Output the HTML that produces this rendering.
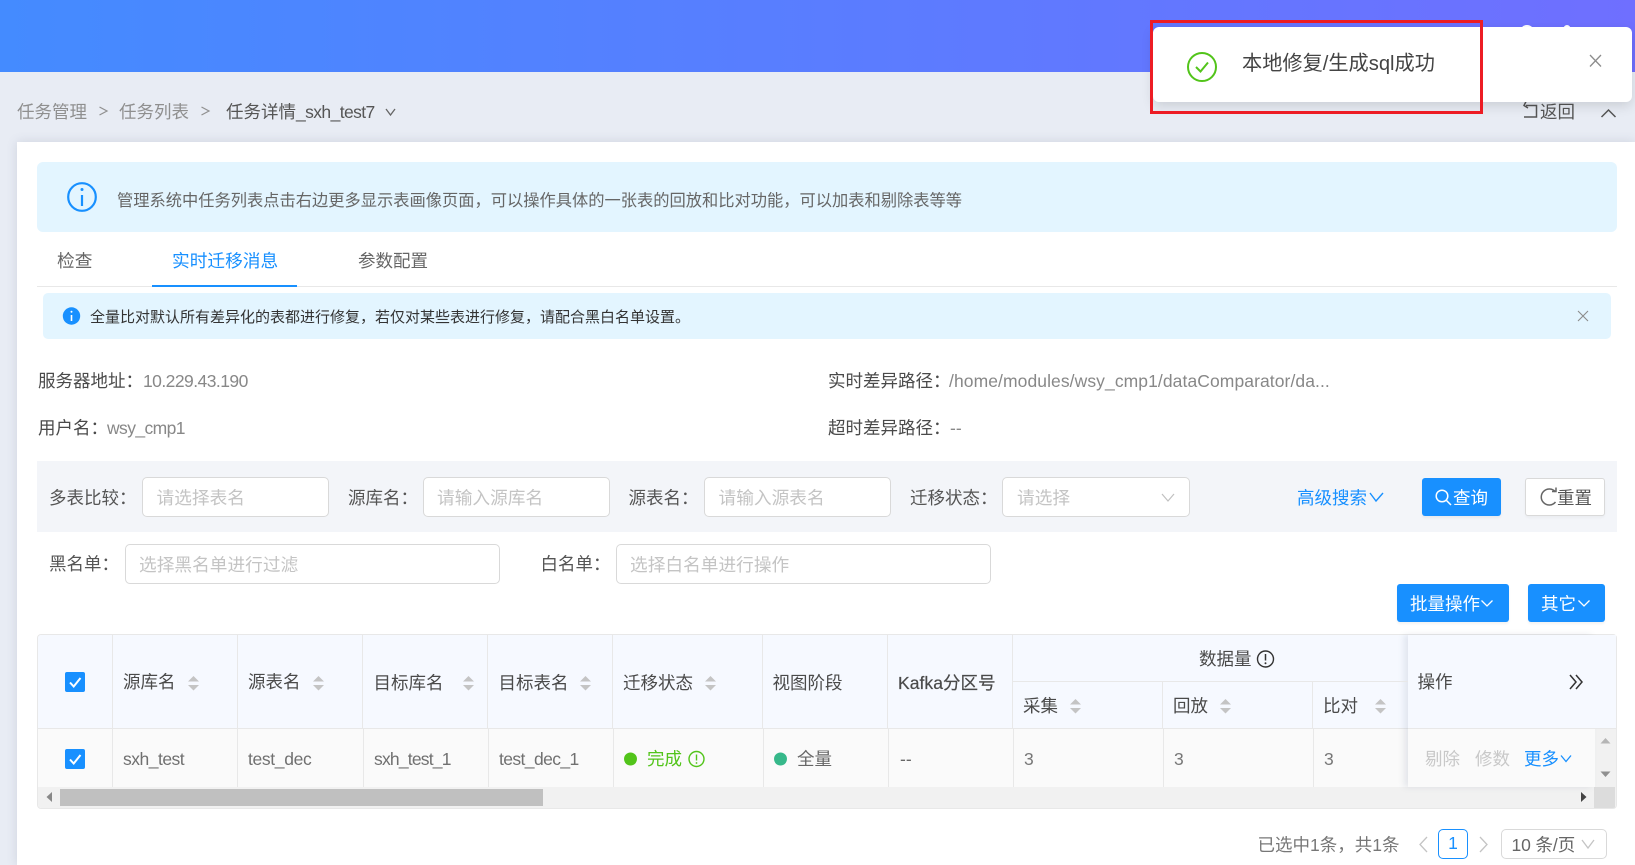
<!DOCTYPE html>
<html lang="zh-CN">
<head>
<meta charset="utf-8">
<title>任务详情</title>
<style>
html,body{margin:0;padding:0;background:#e8ecf4;}
body{position:relative;width:1635px;height:865px;overflow:hidden;font-family:"Liberation Sans","Noto Sans CJK SC",sans-serif;font-size:17.5px;color:#555;}
.b{position:absolute;box-sizing:border-box;}
.t{position:absolute;white-space:nowrap;line-height:24px;height:24px;margin-top:-12px;}
.inp{position:absolute;box-sizing:border-box;background:#fff;border:1px solid #d9d9d9;border-radius:5px;height:40px;}
.ph{color:#c4c4c4;}
.k{color:#4a4a4a;}
.v{color:#888;letter-spacing:-.7px;}
.h{color:#4a4a4a;}
.d{color:#707070;letter-spacing:-.5px;}
svg{position:absolute;left:0;top:0;}
</style>
</head>
<body>
<div class="b" style="left:0;top:0;width:1635px;height:72px;background:linear-gradient(90deg,#448bff 0%,#6f6fff 100%);"></div>
<div class="b" style="left:1520px;top:25px;width:14px;height:14px;border-radius:50%;background:#fff;"></div>
<div class="b" style="left:1563px;top:25px;width:8px;height:10px;border-radius:50%;background:#fff;"></div>

<div class="t" style="left:17px;top:111.500px;color:#8f8f8f;">任务管理</div>
<div class="t" style="left:119px;top:111.500px;color:#8f8f8f;">任务列表</div>
<div class="t" style="left:226px;top:111.500px;color:#555;">任务详情<span style="letter-spacing:-.6px;">_sxh_test7</span></div>
<div class="t" style="left:1540px;top:111.500px;color:#555;">返回</div>

<div class="b" style="left:17px;top:142px;width:1618px;height:723px;background:#fff;box-shadow:0 0 10px rgba(90,100,130,.18);"></div>
<div class="b" style="left:37px;top:162px;width:1580px;height:70px;background:#e3f5ff;border-radius:6px;"></div>
<div class="t" style="left:117px;top:201px;font-size:16.25px;color:#666;">管理系统中任务列表点击右边更多显示表画像页面，可以操作具体的一张表的回放和比对功能，可以加表和剔除表等等</div>

<div class="t" style="left:57px;top:261px;color:#666;font-size:17.700px;">检查</div>
<div class="t" style="left:172px;top:261px;color:#1890ff;font-size:17.700px;">实时迁移消息</div>
<div class="t" style="left:358px;top:261px;color:#666;">参数配置</div>
<div class="b" style="left:37px;top:286px;width:1580px;height:1px;background:#e8e8e8;"></div>
<div class="b" style="left:152px;top:285px;width:145px;height:2px;background:#1890ff;"></div>

<div class="b" style="left:43px;top:293px;width:1568px;height:46px;background:#e3f5ff;border-radius:5px;"></div>
<div class="t" style="left:90px;top:318px;font-size:15px;color:#333;">全量比对默认所有差异化的表都进行修复，若仅对某些表进行修复，请配合黑白名单设置。</div>

<div class="t k" style="left:38px;top:381px;">服务器地址：</div>
<div class="t v" style="left:143px;top:381px;letter-spacing:-.55px;">10.229.43.190</div>
<div class="t k" style="left:38px;top:428px;">用户名：</div>
<div class="t v" style="left:107px;top:428px;letter-spacing:-.6px;">wsy_cmp1</div>
<div class="t k" style="left:828px;top:381px;">实时差异路径：</div>
<div class="t v" style="left:949px;top:381px;letter-spacing:.08px;">/home/modules/wsy_cmp1/dataComparator/da...</div>
<div class="t k" style="left:828px;top:428px;">超时差异路径：</div>
<div class="t v" style="left:950px;top:428px;letter-spacing:0;">--</div>

<div class="b" style="left:37px;top:461px;width:1580px;height:71px;background:#f3f5f9;"></div>
<div class="t" style="left:49px;top:498px;">多表比较：</div>
<div class="inp" style="left:142px;top:477px;width:187px;"></div>
<div class="t ph" style="left:156.500px;top:498px;font-size:17.700px;">请选择表名</div>
<div class="t" style="left:348px;top:498px;">源库名：</div>
<div class="inp" style="left:423px;top:477px;width:187px;"></div>
<div class="t ph" style="left:437px;top:498px;font-size:17.700px;">请输入源库名</div>
<div class="t" style="left:628.500px;top:498px;">源表名：</div>
<div class="inp" style="left:704px;top:477px;width:187px;"></div>
<div class="t ph" style="left:718.500px;top:498px;font-size:17.700px;">请输入源表名</div>
<div class="t" style="left:910px;top:498px;">迁移状态：</div>
<div class="inp" style="left:1002px;top:477px;width:188px;"></div>
<div class="t ph" style="left:1017px;top:498px;font-size:17.700px;">请选择</div>
<div class="t" style="left:1297px;top:498px;color:#1890ff;">高级搜索</div>
<div class="b" style="left:1422px;top:478px;width:79px;height:38px;background:#1890ff;border-radius:3px;box-shadow:0 2px 2px rgba(0,0,0,.05);"></div>
<div class="t" style="left:1453px;top:497.500px;color:#fff;">查询</div>
<div class="b" style="left:1525px;top:478px;width:80px;height:38px;background:#fff;border:1px solid #d9d9d9;border-radius:3px;box-shadow:0 2px 2px rgba(0,0,0,.03);"></div>
<div class="t" style="left:1557px;top:497.500px;color:#555;">重置</div>

<div class="t" style="left:49px;top:564px;">黑名单：</div>
<div class="inp" style="left:125px;top:544px;width:375px;"></div>
<div class="t ph" style="left:139px;top:565px;font-size:17.700px;">选择黑名单进行过滤</div>
<div class="t" style="left:540.500px;top:564px;">白名单：</div>
<div class="inp" style="left:616px;top:544px;width:375px;"></div>
<div class="t ph" style="left:630px;top:565px;font-size:17.700px;">选择白名单进行操作</div>
<div class="b" style="left:1397px;top:584px;width:112px;height:38px;background:#1890ff;border-radius:3px;box-shadow:0 2px 2px rgba(0,0,0,.05);"></div>
<div class="t" style="left:1410px;top:604px;color:#fff;">批量操作</div>
<div class="b" style="left:1528px;top:584px;width:77px;height:38px;background:#1890ff;border-radius:3px;box-shadow:0 2px 2px rgba(0,0,0,.05);"></div>
<div class="t" style="left:1541px;top:604px;color:#fff;">其它</div>

<!-- table -->
<div class="b" style="left:37px;top:634px;width:1580px;height:175px;border:1px solid #e8e8e8;border-radius:4px;background:#fafafa;overflow:hidden;">
  <div class="b" style="left:0;top:0;width:1578px;height:94px;background:#f6f9ff;border-bottom:1px solid #e8e8e8;"></div>
  <div class="b" style="left:0;top:152px;width:1578px;height:21px;background:#f1f1f1;"></div>
  <div class="b" style="left:22px;top:154px;width:483px;height:17px;background:#c0c0c0;"></div>
  <div class="b" style="left:1556px;top:94px;width:22px;height:58px;background:#f1f1f1;"></div>
  <div class="b" style="left:1556px;top:152px;width:21px;height:21px;background:#dcdcdc;"></div>
</div>
<div class="b" style="left:1408px;top:635px;width:187px;height:152px;background:#fafafa;box-shadow:-4px 0 6px rgba(100,110,140,.14);"></div>
<div class="b" style="left:1408px;top:635px;width:208px;height:94px;background:#f6f9ff;border-bottom:1px solid #e8e8e8;"></div>

<div class="t h" style="left:123px;top:682px;">源库名</div>
<div class="t h" style="left:248px;top:682px;">源表名</div>
<div class="t h" style="left:373.500px;top:683px;">目标库名</div>
<div class="t h" style="left:498.500px;top:683px;">目标表名</div>
<div class="t h" style="left:623px;top:683px;">迁移状态</div>
<div class="t h" style="left:772.500px;top:683px;">视图阶段</div>
<div class="t h" style="left:898px;top:683px;letter-spacing:.05px;-webkit-text-stroke:.2px #4a4a4a;">Kafka分区号</div>
<div class="t h" style="left:1199px;top:659px;">数据量</div>
<div class="t h" style="left:1023px;top:706px;">采集</div>
<div class="t h" style="left:1173px;top:706px;">回放</div>
<div class="t h" style="left:1323px;top:706px;">比对</div>
<div class="t h" style="left:1417.500px;top:682px;">操作</div>

<div class="t d" style="left:123px;top:759px;">sxh_test</div>
<div class="t d" style="left:248px;top:759px;letter-spacing:-.35px;">test_dec</div>
<div class="t d" style="left:374px;top:759px;letter-spacing:-.8px;">sxh_test_1</div>
<div class="t d" style="left:499px;top:759px;letter-spacing:-.6px;">test_dec_1</div>
<div class="t" style="left:647px;top:759px;color:#52c41a;">完成</div>
<div class="t" style="left:797px;top:759px;color:#666;">全量</div>
<div class="t" style="left:900px;top:759px;color:#666;">--</div>
<div class="t" style="left:1024px;top:759px;color:#777;">3</div>
<div class="t" style="left:1174px;top:759px;color:#777;">3</div>
<div class="t" style="left:1324px;top:759px;color:#777;">3</div>
<div class="t" style="left:1425px;top:759px;color:#c8c8c8;">剔除</div>
<div class="t" style="left:1475px;top:759px;color:#c8c8c8;">修数</div>
<div class="t" style="left:1524px;top:759px;color:#1890ff;">更多</div>

<div class="t" style="left:1257.500px;top:845px;color:#777;font-size:17.500px;">已选中1条，共1条</div>
<div class="b" style="left:1438px;top:829px;width:30px;height:30px;border:1px solid #1890ff;border-radius:5px;background:#fff;"></div>
<div class="t" style="left:1438px;top:843px;width:30px;text-align:center;color:#1890ff;">1</div>
<div class="b" style="left:1501px;top:829px;width:106px;height:30px;border:1px solid #d9d9d9;border-radius:5px;background:#fff;"></div>
<div class="t" style="left:1511.500px;top:845px;color:#666;letter-spacing:-.1px;">10 条/页</div>

<svg width="1635" height="865" viewBox="0 0 1635 865" fill="none">
  <defs>
    <g id="s"><path d="M0 5.500L5.500 0L11 5.500Z" fill="#c4c4c4"/><path d="M0 9H11L5.500 14.500Z" fill="#c4c4c4"/></g>
  </defs>
  <!-- breadcrumb -->
  <path d="M99.500 107L107 111L99.500 115M201.500 107L209 111L201.500 115" stroke="#909090" stroke-width="1.200"/>
  <path d="M386 109L390.500 115L395 109" stroke="#666" stroke-width="1.300"/>
  <!-- info icon -->
  <circle cx="82" cy="197" r="13.800" stroke="#1890ff" stroke-width="2.200"/>
  <path d="M82 195V206" stroke="#1890ff" stroke-width="2.200"/><circle cx="82" cy="189.500" r="1.500" fill="#1890ff"/>
  <!-- alert icon -->
  <circle cx="71.500" cy="316" r="8.700" fill="#1890ff"/>
  <path d="M71.500 315V321" stroke="#fff" stroke-width="1.600"/><circle cx="71.500" cy="311.800" r="1" fill="#fff"/>
  <path d="M1578 311L1588 321M1588 311L1578 321" stroke="#8c8c8c" stroke-width="1.100"/>
  <!-- select chevron -->
  <path d="M1162 494L1168 501L1174 494" stroke="#c0c0c0" stroke-width="1.200"/>
  <path d="M1370 493L1376 501L1383 493" stroke="#1890ff" stroke-width="1.400"/>
  <!-- search -->
  <circle cx="1442" cy="496" r="5.800" stroke="#fff" stroke-width="1.500"/><path d="M1446.500 500.500L1451 505" stroke="#fff" stroke-width="1.500"/>
  <!-- reset -->
  <path d="M1555.500 492A8 8 0 1 0 1555.500 502M1552 491.500L1556 491.500L1556 487.500" stroke="#666" stroke-width="1.500"/>
  <path d="M1481.500 600.500L1487 606L1492.500 600.500M1578.500 600.500L1584 606L1589.500 600.500" stroke="#fff" stroke-width="1.300"/>

  <!-- table lines -->
  <path d="M112.500 635V787M237.500 635V787M362.500 635V729M487.500 635V729M612.500 635V729M762.500 635V729M887.500 635V729M1012.500 635V729M1162.500 681V729M1312.500 681V729M1012 681.500H1408M363.500 729V787M488.500 729V787M613.500 729V787M763.500 729V787M888.500 729V787M1013.500 729V787M1163.500 729V787M1313.500 729V787" stroke="#e8e8e8" stroke-width="1"/>
  <!-- checkboxes -->
  <rect x="65" y="672" width="20" height="20" rx="2" fill="#1890ff"/>
  <path d="M70 682.500L73.700 686.500L80.500 678" stroke="#fff" stroke-width="2"/>
  <rect x="65" y="749" width="20" height="20" rx="2" fill="#1890ff"/>
  <path d="M70 759.500L73.700 763.500L80.500 755" stroke="#fff" stroke-width="2"/>
  <!-- sort -->
  <use href="#s" x="188" y="676"/><use href="#s" x="313" y="676"/><use href="#s" x="463" y="676"/><use href="#s" x="580" y="676"/><use href="#s" x="705" y="676"/>
  <use href="#s" x="1070" y="699"/><use href="#s" x="1220" y="699"/><use href="#s" x="1375" y="699"/>
  <!-- data info -->
  <circle cx="1265.500" cy="659" r="8" stroke="#333" stroke-width="1.400"/>
  <path d="M1265.500 654V660.500" stroke="#333" stroke-width="1.500"/><circle cx="1265.500" cy="663.300" r="1" fill="#333"/>
  <!-- expand -->
  <path d="M1570 675L1576 682L1570 689M1576 675L1582 682L1576 689" stroke="#333" stroke-width="1.500"/>
  <!-- status -->
  <circle cx="630.500" cy="759" r="6.500" fill="#52c41a"/>
  <circle cx="696.500" cy="759" r="7.500" stroke="#52c41a" stroke-width="1.400"/>
  <path d="M696.500 754.500V760.500" stroke="#52c41a" stroke-width="1.400"/><circle cx="696.500" cy="763" r=".9" fill="#52c41a"/>
  <circle cx="780.500" cy="759" r="6.500" fill="#36b88a"/>
  <path d="M1561 755.500L1566 761.500L1571 755.500" stroke="#1890ff" stroke-width="1.300"/>
  <!-- scroll arrows -->
  <path d="M52 792V802L46.500 797Z" fill="#888"/>
  <path d="M1581 792V802L1586.500 797Z" fill="#444"/>
  <path d="M1600.500 743.500H1610.500L1605.500 738Z" fill="#b5b5b5"/>
  <path d="M1600.500 771.500H1610.500L1605.500 777Z" fill="#8f8f8f"/>
  <!-- pagination -->
  <path d="M1427 837L1420 844.500L1427 852" stroke="#c4c4c4" stroke-width="1.300"/>
  <path d="M1480 837L1487 844.500L1480 852" stroke="#c4c4c4" stroke-width="1.300"/>
  <path d="M1582 840L1588 848L1594 840" stroke="#c4c4c4" stroke-width="1.300"/>
  <!-- return + caret -->
  <path d="M1526 105.500H1536.500V117H1524M1526 101.500L1524 105.500L1528 108" stroke="#555" stroke-width="1.500"/>
  <path d="M1601.500 117L1608.500 110L1615.500 117" stroke="#555" stroke-width="1.500"/>
</svg>

<!-- notification -->
<div class="b" style="left:1153px;top:27px;width:479px;height:75px;background:#fff;border-radius:6px;box-shadow:0 4px 12px rgba(0,0,0,.13);"></div>
<div class="t" style="left:1242px;top:64px;font-size:20.200px;color:#444;">本地修复/生成sql成功</div>
<div class="b" style="left:1150px;top:20px;width:333px;height:94px;border:3px solid #ed1c24;"></div>
<svg width="1635" height="865" viewBox="0 0 1635 865" fill="none">
  <circle cx="1202" cy="67" r="14" stroke="#52c41a" stroke-width="2"/>
  <path d="M1196 67L1200.500 71.500L1208 62.500" stroke="#52c41a" stroke-width="2"/>
  <path d="M1590 55L1601 66.500M1601 55L1590 66.500" stroke="#8c8c8c" stroke-width="1.300"/>
</svg>
</body>
</html>
